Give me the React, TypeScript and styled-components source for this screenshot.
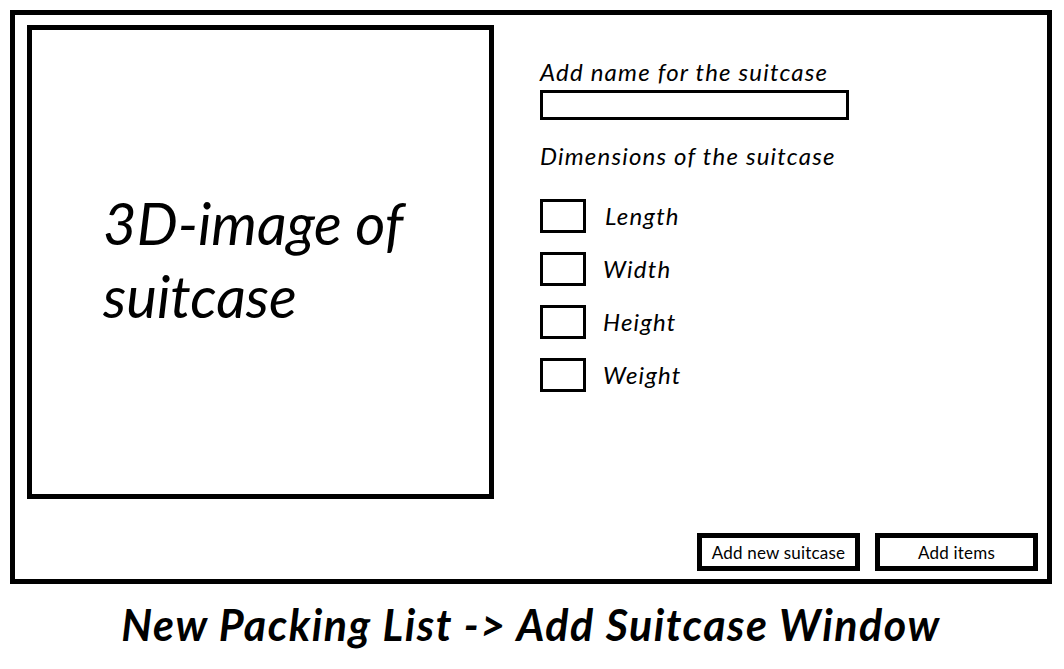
import styled, { createGlobalStyle } from "styled-components";

const GlobalStyle = createGlobalStyle`
  body {
    margin: 0;
    background: #ffffff;
    font-family: Lato, "Open Sans", sans-serif;
    color: #000000;
  }
`;

const Page = styled.div`
  width: 1064px;
  height: 669px;
  padding: 10px 0 0 10px;
  box-sizing: border-box;
`;

const Frame = styled.div`
  width: 1042px;
  height: 574px;
  border: 5px solid #000;
  box-sizing: border-box;
  display: flex;
  flex-direction: column;
`;

const Content = styled.div`
  display: flex;
  padding: 10px 0 0 12px;
  gap: 46px;
`;

const ImagePanel = styled.div`
  width: 467px;
  height: 474px;
  border: 5px solid #000;
  box-sizing: border-box;
  padding: 156px 0 0 71px;
`;

const ImageCaption = styled.p`
  margin: 0;
  font-style: italic;
  font-size: 58px;
  line-height: 73px;
`;

const Form = styled.div`
  display: flex;
  flex-direction: column;
  padding-top: 33px;
`;

const Label = styled.div`
  font-style: italic;
  font-size: 24px;
  line-height: 28px;
  letter-spacing: 1.2px;
`;

const NameInput = styled.div`
  width: 309px;
  height: 30px;
  border: 3px solid #000;
  box-sizing: border-box;
  margin: 4px 0 22px;
`;

const DimensionList = styled.div`
  display: flex;
  flex-direction: column;
  gap: 19px;
  margin-top: 29px;
`;

const DimensionRow = styled.div<{ $gap: number }>`
  display: flex;
  align-items: center;
  gap: ${(p) => p.$gap}px;
`;

const Checkbox = styled.div`
  width: 46px;
  height: 34px;
  border: 3px solid #000;
  box-sizing: border-box;
`;

const ButtonBar = styled.div`
  margin-top: auto;
  display: flex;
  justify-content: flex-end;
  gap: 15px;
  padding: 0 9px 8px 0;
`;

const Button = styled.div`
  width: 163px;
  height: 38px;
  border: 5px solid #000;
  box-sizing: border-box;
  display: flex;
  align-items: center;
  justify-content: center;
  font-size: 17px;
  letter-spacing: 0.2px;
`;

const Title = styled.h1`
  margin: 0;
  padding-top: 16px;
  width: 1042px;
  text-align: center;
  font-style: italic;
  font-weight: 700;
  font-size: 43px;
  line-height: 50px;
  letter-spacing: 1.5px;
`;

const dimensions = [
  { name: "Length", gap: 19 },
  { name: "Width", gap: 17 },
  { name: "Height", gap: 17 },
  { name: "Weight", gap: 17 },
];

export default function App() {
  return (
    <Page>
      <GlobalStyle />
      <Frame>
        <Content>
          <ImagePanel>
            <ImageCaption>
              3D-image of
              <br />
              suitcase
            </ImageCaption>
          </ImagePanel>
          <Form>
            <Label>Add name for the suitcase</Label>
            <NameInput />
            <Label>Dimensions of the suitcase</Label>
            <DimensionList>
              {dimensions.map((d) => (
                <DimensionRow key={d.name} $gap={d.gap}>
                  <Checkbox />
                  <Label>{d.name}</Label>
                </DimensionRow>
              ))}
            </DimensionList>
          </Form>
        </Content>
        <ButtonBar>
          <Button>Add new suitcase</Button>
          <Button>Add items</Button>
        </ButtonBar>
      </Frame>
      <Title>New Packing List -&gt; Add Suitcase Window</Title>
    </Page>
  );
}
